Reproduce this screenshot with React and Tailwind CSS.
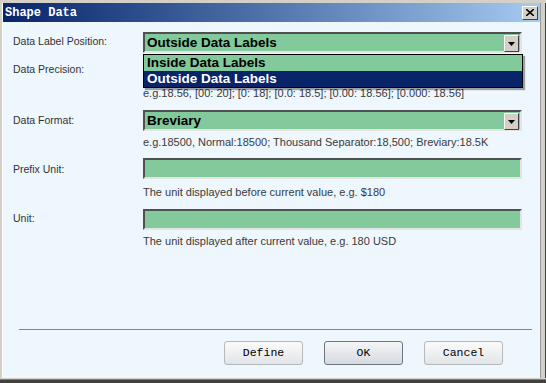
const labelCls = "text-[10.5px] text-[#333] leading-none";
const hintCls = "text-[11px] text-[#3a3a3a] leading-none";

const ArrowBtn = () => (
  <div className="absolute right-[1px] top-[1px] w-[15px] h-[17px] bg-[#d4d0c8] border border-t-white border-l-white border-b-[#404040] border-r-[#404040] flex items-center justify-center">
    <svg width="7" height="4" viewBox="0 0 7 4">
      <path d="M0 0h7L3.5 4z" fill="#000" />
    </svg>
  </div>
);

const Select = ({ value }) => (
  <div className="relative h-[21px] w-[379px] bg-[#82c99b] border-2 border-t-[#505050] border-l-[#505050] border-b-[#e4e4e4] border-r-[#e4e4e4] flex items-center pl-[2px]">
    {value && <span className="text-[13.5px] font-bold text-black leading-none">{value}</span>}
    <ArrowBtn />
  </div>
);

const Input = () => (
  <div className="h-[21px] w-[379px] bg-[#82c99b] border-2 border-t-[#505050] border-l-[#505050] border-b-[#e4e4e4] border-r-[#e4e4e4]" />
);

const Button = ({ children, primary }) => (
  <button
    className={
      primary
        ? "w-[79px] h-[24px] rounded-[3px] border border-[#6f7680] bg-gradient-to-b from-[#f4f5f6] to-[#d6dadf] text-[11.5px] text-black"
        : "w-[79px] h-[24px] rounded-[3px] border border-[#b4b8bd] bg-gradient-to-b from-[#fafafa] to-[#e2e5e8] text-[11.5px] text-black"
    }
    style={{ fontFamily: '"Liberation Mono", monospace' }}
  >
    {children}
  </button>
);

export default function App() {
  return (
    <div
      className="w-[546px] h-[383px] bg-[#d4d0c8] flex flex-col overflow-hidden"
      style={{ fontFamily: '"Liberation Sans", Arial, sans-serif' }}
    >
      <div className="flex flex-1 min-h-0 pt-[3px] pl-[2px]">
        <div className="w-[1px] bg-white" />
        <div className="flex flex-col flex-1">
          {/* title bar */}
          <div className="h-[19px] bg-gradient-to-r from-[#0a246a] to-[#a6caf0] flex items-center justify-between pl-[2px] pr-[2px]">
            <span
              className="text-white font-bold text-[12px] leading-none"
              style={{ fontFamily: '"Liberation Mono", monospace' }}
            >
              Shape Data
            </span>
            <div className="w-[16px] h-[14px] bg-[#d4d0c8] border border-t-white border-l-white border-b-[#404040] border-r-[#404040] flex items-center justify-center">
              <svg width="8" height="7" viewBox="0 0 8 7">
                <path d="M0 0L8 7M8 0L0 7" stroke="#000" strokeWidth="1.6" />
              </svg>
            </div>
          </div>

          {/* body */}
          <div className="flex-1 bg-[#eef6fe] pl-[10px] pt-[10px] flex flex-col">
            <div className="flex">
              <div className={"w-[130px] pt-[4px] " + labelCls}>Data Label Position:</div>
              <div className="relative">
                <Select value="Outside Data Labels" />
                {/* open dropdown list */}
                <div className="absolute left-0 top-[22px] w-[380px] border border-black bg-[#82c99b] shadow-[2px_2px_1px_rgba(0,0,0,0.35)] z-10">
                  <div className="h-[16px] flex items-center pl-[3px] text-[13.5px] font-bold leading-none text-black">
                    Inside Data Labels
                  </div>
                  <div className="h-[16px] flex items-center pl-[3px] text-[13.5px] font-bold leading-none text-white bg-[#0a246a]">
                    Outside Data Labels
                  </div>
                </div>
              </div>
            </div>

            <div className="flex mt-[9px]">
              <div className={"w-[130px] pt-[2px] " + labelCls}>Data Precision:</div>
              <div className="flex flex-col">
                <Select />
                <div className={"mt-[5px] " + hintCls}>
                  e.g.18.56, [00: 20]; [0: 18]; [0.0: 18.5]; [0.00: 18.56]; [0.000: 18.56]
                </div>
              </div>
            </div>

            <div className="flex mt-[11px]">
              <div className={"w-[130px] pt-[5px] " + labelCls}>Data Format:</div>
              <div className="flex flex-col">
                <Select value="Breviary" />
                <div className={"mt-[6px] " + hintCls}>
                  e.g.18500, Normal:18500; Thousand Separator:18,500; Breviary:18.5K
                </div>
              </div>
            </div>

            <div className="flex mt-[10px]">
              <div className={"w-[130px] pt-[6px] " + labelCls}>Prefix Unit:</div>
              <div className="flex flex-col">
                <Input />
                <div className={"mt-[8px] " + hintCls}>
                  The unit displayed before current value, e.g. $180
                </div>
              </div>
            </div>

            <div className="flex mt-[11px]">
              <div className={"w-[130px] pt-[4px] " + labelCls}>Unit:</div>
              <div className="flex flex-col">
                <Input />
                <div className={"mt-[6px] " + hintCls}>
                  The unit displayed after current value, e.g. 180 USD
                </div>
              </div>
            </div>

            <div className="flex-1" />
            <div className="h-[1px] bg-[#7f8892] ml-[6px] mr-[8px]" />
            <div className="flex justify-end gap-[21px] pr-[37px] pt-[11px] pb-[13px]">
              <Button>Define</Button>
              <Button primary>OK</Button>
              <Button>Cancel</Button>
            </div>
          </div>
        </div>
        <div className="w-[1px] bg-[#9a9a9a]" />
        <div className="w-[4px] bg-[#d4d0c8]" />
        <div className="w-[1px] bg-[#404040]" />
      </div>
      <div className="h-[1px] bg-[#d4d0c8]" />
      <div className="h-[1px] bg-[#808080]" />
      <div className="h-[3px] bg-[#404040]" />
    </div>
  );
}
